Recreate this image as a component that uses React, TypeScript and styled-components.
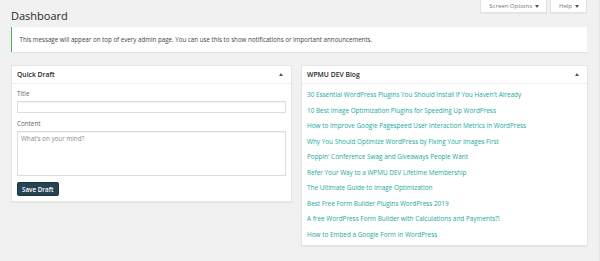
import React from "react";
import styled, { createGlobalStyle } from "styled-components";

const posts = [
  "30 Essential WordPress Plugins You Should Install If You Haven't Already",
  "10 Best Image Optimization Plugins for Speeding Up WordPress",
  "How to Improve Google Pagespeed User Interaction Metrics in WordPress",
  "Why You Should Optimize WordPress by Fixing Your Images First",
  "Poppin' Conference Swag and Giveaways People Want",
  "Refer Your Way to a WPMU DEV Lifetime Membership",
  "The Ultimate Guide to Image Optimization",
  "Best Free Form Builder Plugins WordPress 2019",
  "A free WordPress Form Builder with Calculations and Payments?!",
  "How to Embed a Google Form in WordPress",
];

const GlobalStyle = createGlobalStyle`
  html, body {
    margin: 0;
    background: #f1f1f1;
  }
  body {
    font-family: "Open Sans", "Liberation Sans", sans-serif;
    color: #444;
  }
`;

export default function App() {
  return (
    <>
      <GlobalStyle />
      <Page>
        <Header>
          <PageTitle>Dashboard</PageTitle>
          <MetaLinks>
            <MetaButton>
              Screen Options <Caret />
            </MetaButton>
            <MetaButton>
              Help <Caret />
            </MetaButton>
          </MetaLinks>
        </Header>

        <Notice>
          This message will appear on top of every admin page. You can use this
          to show notifications or important announcements.
        </Notice>

        <Columns>
          <Postbox>
            <PostboxHeader>
              <PostboxTitle>Quick Draft</PostboxTitle>
              <Toggle />
            </PostboxHeader>
            <DraftForm>
              <Label>Title</Label>
              <TextInput />
              <Label>Content</Label>
              <TextArea placeholder="What’s on your mind?" />
              <SaveButton>Save Draft</SaveButton>
            </DraftForm>
          </Postbox>

          <Postbox>
            <PostboxHeader>
              <PostboxTitle>WPMU DEV Blog</PostboxTitle>
              <Toggle />
            </PostboxHeader>
            <PostList>
              {posts.map((title) => (
                <PostLink key={title} href="#">
                  {title}
                </PostLink>
              ))}
            </PostList>
          </Postbox>
        </Columns>
      </Page>
    </>
  );
}

const Page = styled.div`
  width: 600px;
  height: 261px;
  box-sizing: border-box;
  padding: 0 12px 0 11px;
  border-right: 1px solid #e4e4e4;
`;

const Header = styled.div`
  display: flex;
  justify-content: space-between;
  align-items: flex-start;
  height: 27px;
`;

const PageTitle = styled.h1`
  margin: 0;
  padding-top: 9px;
  font-size: 11px;
  line-height: 14px;
  font-weight: 400;
  color: #23282d;
`;

const MetaLinks = styled.div`
  display: flex;
  gap: 3px;
`;

const MetaButton = styled.div`
  display: flex;
  align-items: center;
  gap: 3px;
  height: 13px;
  box-sizing: border-box;
  padding: 0 7px 0 8px;
  background: #fff;
  border: 1px solid #e2e2e2;
  border-top: none;
  box-shadow: 0 1px 1px rgba(0, 0, 0, 0.04);
  font-size: 6px;
  color: #72777c;
`;

const Caret = styled.span`
  width: 0;
  height: 0;
  border-left: 2px solid transparent;
  border-right: 2px solid transparent;
  border-top: 3px solid #555;
`;

const Notice = styled.div`
  height: 25px;
  box-sizing: border-box;
  display: flex;
  align-items: center;
  padding-left: 7.5px;
  background: #fff;
  border-left: 1.5px solid #46b450;
  box-shadow: 0 1px 1px rgba(0, 0, 0, 0.06);
  font-size: 6.2px;
  color: #444;
`;

const Columns = styled.div`
  display: grid;
  grid-template-columns: 281px 287px;
  gap: 9px;
  margin-top: 13px;
  align-items: start;
`;

const Postbox = styled.div`
  background: #fff;
  border: 1px solid #e5e5e5;
  box-shadow: 0 1px 1px rgba(0, 0, 0, 0.04);
`;

const PostboxHeader = styled.div`
  display: flex;
  align-items: center;
  justify-content: space-between;
  height: 17px;
  padding: 0 8px 0 5px;
  border-bottom: 1px solid #eee;
`;

const PostboxTitle = styled.h2`
  margin: 0;
  font-size: 6.8px;
  font-weight: 600;
  color: #23282d;
`;

const Toggle = styled.span`
  width: 0;
  height: 0;
  border-left: 2px solid transparent;
  border-right: 2px solid transparent;
  border-bottom: 3px solid #555;
`;

const DraftForm = styled.div`
  display: flex;
  flex-direction: column;
  align-items: flex-start;
  padding: 5px 5px 5px;
`;

const Label = styled.label`
  font-size: 6.3px;
  line-height: 9px;
  margin-bottom: 3px;
  color: #666;
`;

const TextInput = styled.input`
  width: 100%;
  height: 12px;
  box-sizing: border-box;
  margin: 0 0 6px;
  border: 1px solid #ddd;
  box-shadow: inset 0 1px 1px rgba(0, 0, 0, 0.05);
  outline: none;
`;

const TextArea = styled.textarea`
  width: 100%;
  height: 45px;
  box-sizing: border-box;
  margin: 0 0 6px;
  padding: 2px 3px;
  resize: none;
  font-family: inherit;
  font-size: 6.3px;
  border: 1px solid #ddd;
  box-shadow: inset 0 1px 1px rgba(0, 0, 0, 0.05);
  outline: none;
  &::placeholder {
    color: #8a8a8a;
  }
`;

const SaveButton = styled.button`
  height: 14px;
  padding: 0 4px;
  border: 1px solid #1b3540;
  border-radius: 1.5px;
  background: #244454;
  color: #fff;
  font-family: inherit;
  font-size: 6.3px;
  font-weight: 600;
`;

const PostList = styled.div`
  display: flex;
  flex-direction: column;
  padding: 3px 5px 3px;
`;

const PostLink = styled.a`
  display: block;
  font-size: 6.4px;
  line-height: 15.5px;
  color: #17a8a0;
  text-decoration: none;
  white-space: nowrap;
`;
